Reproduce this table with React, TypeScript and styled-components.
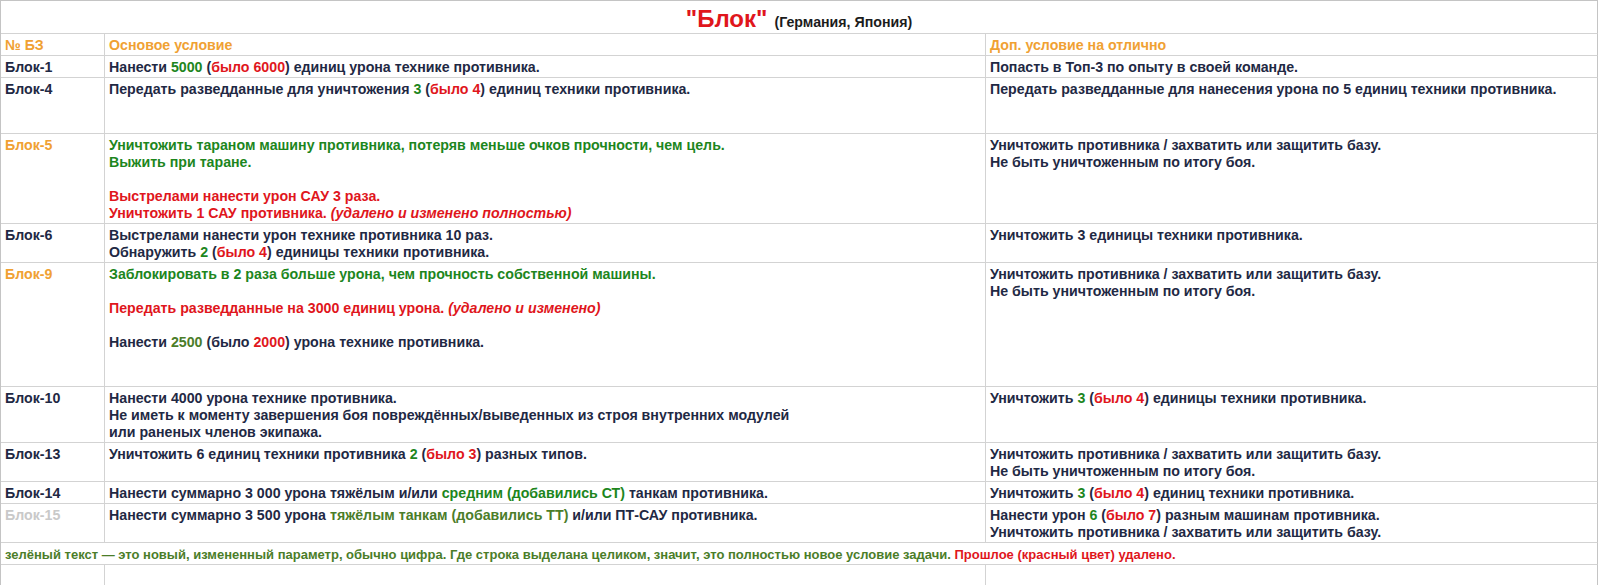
import React from "react";
import styled, { createGlobalStyle } from "styled-components";

const Global = createGlobalStyle`
  html, body { margin: 0; padding: 0; background: #ffffff; }
  body { font-family: "Liberation Sans", Arial, sans-serif; }
`;

const C = {
  text: "#1f2944",
  orange: "#f0a133",
  green: "#1d861d",
  olive: "#4b7d29",
  red: "#e0161c",
  muted: "#c9c9c9",
  line: "#d3d3d3",
  outer: "#c4c4c4",
};

const Sheet = styled.div`
  width: 1598px;
  box-sizing: border-box;
  display: grid;
  grid-template-columns: 104px 881px 1fr;
  border-top: 1px solid ${C.outer};
  border-left: 1px solid ${C.outer};
  font-family: "Liberation Sans", Arial, sans-serif;
  font-weight: bold;
  font-size: 14.2px;
  line-height: 17px;
  color: ${C.text};
`;

const TitleRow = styled.div`
  grid-column: 1 / -1;
  height: 33px;
  display: flex;
  justify-content: center;
  align-items: baseline;
  gap: 7px;
  padding-top: 5px;
  box-sizing: border-box;
  border-right: 1px solid ${C.outer};
  border-bottom: 1px solid ${C.line};
`;

const TitleMain = styled.span`
  color: ${C.red};
  font-size: 24px;
  line-height: 25px;
`;

const TitleSub = styled.span`
  color: #1c1c1c;
  font-size: 14.2px;
`;

const Cell = styled.div<{ $lines?: number; $last?: boolean; $color?: string }>`
  box-sizing: border-box;
  padding: 3px 4px 1px 4px;
  min-height: ${(p) => (p.$lines ?? 1) * 17 + 5}px;
  border-bottom: 1px solid ${C.line};
  border-right: 1px solid ${(p) => (p.$last ? C.outer : C.line)};
  color: ${(p) => p.$color ?? C.text};
  white-space: nowrap;
`;

const WideCell = styled.div`
  grid-column: 1 / -1;
  box-sizing: border-box;
  padding: 3px 4px 1px;
  min-height: 22px;
  border-bottom: 1px solid ${C.line};
  border-right: 1px solid ${C.outer};
  color: ${C.olive};
  font-size: 13px;
  white-space: nowrap;
`;

const Line = styled.div`
  min-height: 17px;
`;

const G = styled.span`color: ${C.green};`;
const O = styled.span`color: ${C.olive};`;
const R = styled.span`color: ${C.red};`;
const I = styled.span`font-style: italic;`;

type RowData = {
  id: string;
  idColor?: string;
  lines: number;
  main: React.ReactNode[];
  extra: React.ReactNode[];
};

const BASE = "Уничтожить противника / захватить или защитить базу.";
const ALIVE = "Не быть уничтоженным по итогу боя.";

const rows: RowData[] = [
  {
    id: "Блок-1",
    lines: 1,
    main: [
      <>Нанести <G>5000</G> (<R>было 6000</R>) единиц урона технике противника.</>,
    ],
    extra: ["Попасть в Топ-3 по опыту в своей команде."],
  },
  {
    id: "Блок-4",
    lines: 3,
    main: [
      <>Передать разведданные для уничтожения <G>3</G> (<R>было 4</R>) единиц техники противника.</>,
    ],
    extra: ["Передать разведданные для нанесения урона по 5 единиц техники противника."],
  },
  {
    id: "Блок-5",
    idColor: C.orange,
    lines: 5,
    main: [
      <G>Уничтожить тараном машину противника, потеряв меньше очков прочности, чем цель.</G>,
      <G>Выжить при таране.</G>,
      "",
      <R>Выстрелами нанести урон САУ 3 раза.</R>,
      <R>Уничтожить 1 САУ противника. <I>(удалено и изменено полностью)</I></R>,
    ],
    extra: [BASE, ALIVE],
  },
  {
    id: "Блок-6",
    lines: 2,
    main: [
      "Выстрелами нанести урон технике противника 10 раз.",
      <>Обнаружить <G>2</G> (<R>было 4</R>) единицы техники противника.</>,
    ],
    extra: ["Уничтожить 3 единицы техники противника."],
  },
  {
    id: "Блок-9",
    idColor: C.orange,
    lines: 7,
    main: [
      <G>Заблокировать в 2 раза больше урона, чем прочность собственной машины.</G>,
      "",
      <R>Передать разведданные на 3000 единиц урона. <I>(удалено и изменено)</I></R>,
      "",
      <>Нанести <O>2500</O> (было <R>2000</R>) урона технике противника.</>,
    ],
    extra: [BASE, ALIVE],
  },
  {
    id: "Блок-10",
    lines: 3,
    main: [
      "Нанести 4000 урона технике противника.",
      "Не иметь к моменту завершения боя повреждённых/выведенных из строя внутренних модулей",
      "или раненых членов экипажа.",
    ],
    extra: [<>Уничтожить <G>3</G> (<R>было 4</R>) единицы техники противника.</>],
  },
  {
    id: "Блок-13",
    lines: 2,
    main: [
      <>Уничтожить 6 единиц техники противника <G>2</G> (<R>было 3</R>) разных типов.</>,
    ],
    extra: [BASE, ALIVE],
  },
  {
    id: "Блок-14",
    lines: 1,
    main: [
      <>Нанести суммарно 3 000 урона тяжёлым и/или <G>средним (добавились СТ)</G> танкам противника.</>,
    ],
    extra: [<>Уничтожить <G>3</G> (<R>было 4</R>) единиц техники противника.</>],
  },
  {
    id: "Блок-15",
    idColor: C.muted,
    lines: 2,
    main: [
      <>Нанести суммарно 3 500 урона <O>тяжёлым танкам (добавились ТТ)</O> и/или ПТ-САУ противника.</>,
    ],
    extra: [
      <>Нанести урон <G>6</G> (<R>было 7</R>) разным машинам противника.</>,
      BASE,
    ],
  },
];

const Lines: React.FC<{ items: React.ReactNode[] }> = ({ items }) => (
  <>
    {items.map((it, i) => (
      <Line key={i}>{it}</Line>
    ))}
  </>
);

export default function App() {
  return (
    <>
      <Global />
      <Sheet>
        <TitleRow>
          <TitleMain>"Блок"</TitleMain>
          <TitleSub>(Германия, Япония)</TitleSub>
        </TitleRow>

        <Cell $color={C.orange}>№ БЗ</Cell>
        <Cell $color={C.orange}>Основое условие</Cell>
        <Cell $color={C.orange} $last>Доп. условие на отлично</Cell>

        {rows.map((r) => (
          <React.Fragment key={r.id}>
            <Cell $lines={r.lines} $color={r.idColor}>{r.id}</Cell>
            <Cell $lines={r.lines}>
              <Lines items={r.main} />
            </Cell>
            <Cell $lines={r.lines} $last>
              <Lines items={r.extra} />
            </Cell>
          </React.Fragment>
        ))}

        <WideCell>
          зелёный текст — это новый, измененный параметр, обычно цифра. Где строка выделана целиком, значит, это полностью новое условие задачи.{" "}
          <R>Прошлое (красный цвет) удалено.</R>
        </WideCell>

        <Cell $lines={1} />
        <Cell $lines={1} />
        <Cell $lines={1} $last />
      </Sheet>
    </>
  );
}
